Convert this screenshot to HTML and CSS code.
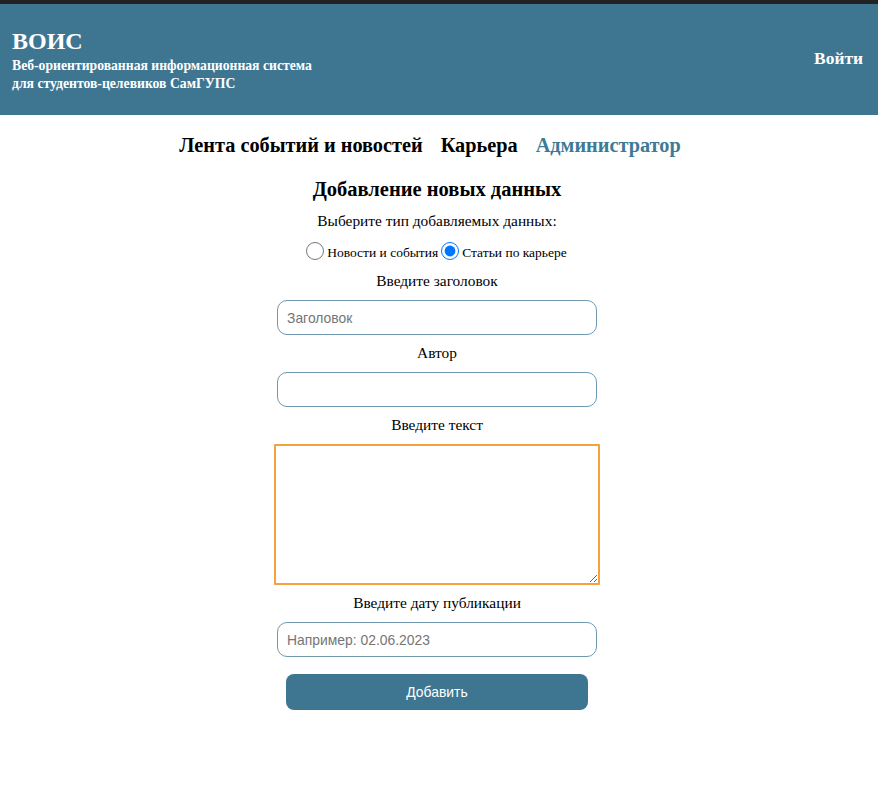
FILE: index.html
```html
<!DOCTYPE html>
<html lang="ru">
<head>
<meta charset="utf-8">
<title>ВОИС</title>
<link rel="stylesheet" href="styles.css">
</head>
<body>
<div class="topstrip"></div>
<header class="header">
  <div class="brand">
    <div class="brand-title">ВОИС</div>
    <div class="brand-sub">Веб-ориентированная информационная система<br>для студентов-целевиков СамГУПС</div>
  </div>
  <a class="login" href="#">Войти</a>
</header>
<nav class="nav">
  <a href="#" class="nav-item">Лента событий и новостей</a>
  <a href="#" class="nav-item">Карьера</a>
  <a href="#" class="nav-item active">Администратор</a>
</nav>
<main class="form">
  <h2 class="form-title">Добавление новых данных</h2>
  <div class="label first">Выберите тип добавляемых данных:</div>
  <div class="radios">
    <input type="radio" name="t" id="r1" class="radio"><label for="r1" class="rlabel">Новости и события</label>
    <input type="radio" name="t" id="r2" class="radio" checked><label for="r2" class="rlabel">Статьи по карьере</label>
  </div>
  <div class="label">Введите заголовок</div>
  <input class="field" type="text" placeholder="Заголовок">
  <div class="label">Автор</div>
  <input class="field" type="text">
  <div class="label">Введите текст</div>
  <textarea class="area" autofocus></textarea>
  <div class="label">Введите дату публикации</div>
  <input class="field" type="text" placeholder="Например: 02.06.2023">
  <button class="btn" type="button">Добавить</button>
</main>
</body>
</html>
```
FILE: styles.css
```css
html, body {
  margin: 0;
  padding: 0;
  background: #fff;
  font-family: "Liberation Serif", "Times New Roman", serif;
  color: #000;
}
.topstrip {
  height: 4px;
  background: #222222;
}
.header {
  height: 111px;
  background: #3e7692;
  display: flex;
  align-items: center;
  justify-content: space-between;
  padding: 0 15px 0 12px;
  color: #fff;
}
.brand {
  padding-top: 2px;
}
.brand-title {
  font-size: 24px;
  font-weight: bold;
  line-height: 24px;
  margin-bottom: 4px;
}
.brand-sub {
  font-size: 13.7px;
  font-weight: bold;
  line-height: 18px;
}
.login {
  color: #fff;
  text-decoration: none;
  font-weight: bold;
  font-size: 17.4px;
  margin-top: -2px;
}
.nav {
  display: flex;
  justify-content: center;
  margin-top: 16px;
}
.nav-item {
  font-size: 20.3px;
  font-weight: bold;
  color: #000;
  text-decoration: none;
  line-height: 28px;
  margin-right: 18px;
}
.nav-item.active {
  color: #3e7a96;
}
.form {
  display: flex;
  flex-direction: column;
  align-items: center;
  padding-right: 4px;
}
.form-title {
  font-size: 20.5px;
  font-weight: bold;
  margin: 16px 0 0;
  line-height: 28px;
}
.label {
  font-size: 15.4px;
  line-height: 18px;
  margin-bottom: 10px;
}
.label.first {
  margin-top: 9px;
  margin-bottom: 10px;
}
.radios {
  display: flex;
  align-items: center;
  height: 22px;
  margin-bottom: 10px;
  padding-left: 2px;
}
.radio {
  width: 18px;
  height: 18px;
  margin: 0 3px 0 0;
}
.rlabel {
  font-size: 13.5px;
  margin-right: 3px;
  margin-top: 3px;
}
.field {
  box-sizing: border-box;
  width: 320px;
  height: 35px;
  border: 1px solid #6f99b0;
  border-radius: 10px;
  padding: 0 9px;
  font-family: "Liberation Sans", Arial, sans-serif;
  font-size: 13.9px;
  color: #333;
  margin-bottom: 9px;
  outline: none;
}
.field::placeholder {
  color: #757575;
}
.area {
  box-sizing: border-box;
  width: 326px;
  height: 141px;
  border: 2px solid #f4a13e;
  border-radius: 1px;
  outline: none;
  margin-bottom: 9px;
  resize: both;
  padding: 1px;
  font-family: "Liberation Serif", serif;
  font-size: 16px;
}
.btn {
  width: 302px;
  height: 36px;
  margin-top: 8px;
  border: none;
  border-radius: 8px;
  background: #3e7692;
  color: #fff;
  font-family: "Liberation Sans", Arial, sans-serif;
  font-size: 13.9px;
}
```
